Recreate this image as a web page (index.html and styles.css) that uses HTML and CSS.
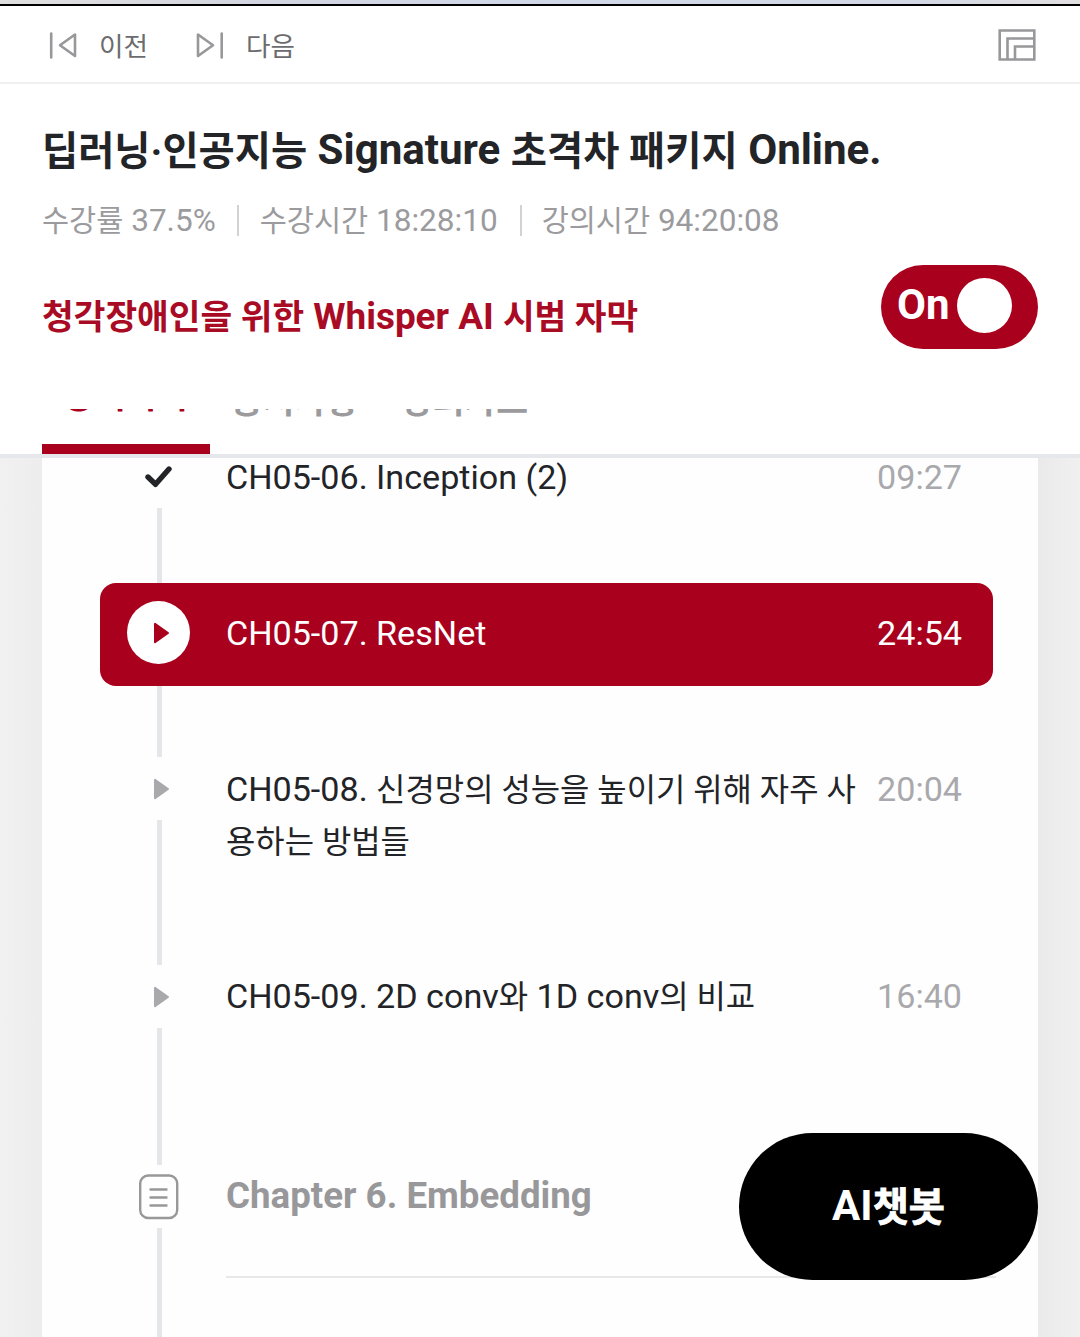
FILE: index.html
```html
<!DOCTYPE html>
<html lang="ko">
<head>
<meta charset="utf-8">
<title>딥러닝·인공지능 Signature 초격차 패키지 Online.</title>
<link rel="stylesheet" href="styles.css">
</head>
<body>
<div class="page">
  <div class="video-edge"></div>
  <nav class="nav">
    <a class="nav-link">
      <svg width="28" height="28" viewBox="0 0 28 28" fill="none" stroke="#98989b" stroke-width="2.600" stroke-linecap="round" stroke-linejoin="round"><path d="M2.200 2.500v24M26 3.500V25L11 14.200z"/></svg>
      <span class="ko">이전</span>
    </a>
    <a class="nav-link next">
      <svg width="28" height="28" viewBox="0 0 28 28" fill="none" stroke="#98989b" stroke-width="2.600" stroke-linecap="round" stroke-linejoin="round"><path d="M25.700 2.500v24M2 3.500V25L17 14.200z"/></svg>
      <span class="ko">다음</span>
    </a>
    <svg class="layout-icon" width="38" height="32" viewBox="0 0 38 32" fill="none" stroke="#98989b" stroke-width="2.600"><path d="M1.700 1.500h34.600v29H1.700zM9.500 30V9.500h27M17 30V17.500h19"/></svg>
  </nav>
  <header class="course">
    <h1 class="title"><span class="ko">딥러닝·인공지능</span> Signature <span class="ko">초격차 패키지</span> Online.</h1>
    <div class="stats">
      <span><span class="ko">수강률</span> 37.5%</span>
      <span><span class="ko">수강시간</span> 18:28:10</span>
      <span><span class="ko">강의시간</span> 94:20:08</span>
    </div>
    <div class="caption">
      <strong class="caption-label"><span class="ko">청각장애인을 위한</span> Whisper AI <span class="ko">시범 자막</span></strong>
      <div class="switch"><span class="switch-text">On</span><span class="knob"></span></div>
    </div>
    <div class="tabs">
      <a class="tab active"><span class="ko">강의목차</span></a>
      <a class="tab"><span class="ko">공지사항</span></a>
      <a class="tab"><span class="ko">강의자료</span></a>
    </div>
  </header>
  <main class="content">
    <ul class="lessons">
      <li class="lesson">
        <div class="rail"><div class="mark"><svg width="28" height="22" viewBox="0 0 28 22" fill="none" stroke="#222428" stroke-width="5.400" stroke-linecap="round" stroke-linejoin="round"><path d="M3 11l7.500 7.300L24 3"/></svg></div></div>
        <div class="name">CH05-06. Inception (2)</div>
        <div class="time">09:27</div>
      </li>
      <li class="lesson current">
        <div class="rail"><div class="mark"><svg class="play" width="17" height="22" viewBox="0 0 17 22"><path d="M2 1.800v18.400L15 11z"/></svg></div></div>
        <div class="name">CH05-07. ResNet</div>
        <div class="time">24:54</div>
      </li>
      <li class="lesson two-line">
        <div class="rail"><div class="mark"><svg class="play" width="17" height="22" viewBox="0 0 17 22"><path d="M2 1.800v18.400L15 11z"/></svg></div></div>
        <div class="name">CH05-08. <span class="ko">신경망의 성능을 높이기 위해 자주 사<br>용하는 방법들</span></div>
        <div class="time">20:04</div>
      </li>
      <li class="lesson last">
        <div class="rail"><div class="mark"><svg class="play" width="17" height="22" viewBox="0 0 17 22"><path d="M2 1.800v18.400L15 11z"/></svg></div></div>
        <div class="name">CH05-09. 2D conv<span class="ko">와</span> 1D conv<span class="ko">의 비교</span></div>
        <div class="time">16:40</div>
      </li>
      <li class="lesson chapter">
        <div class="rail"><div class="mark"><svg width="40" height="46" viewBox="0 0 40 46" fill="none" stroke="#98989b" stroke-width="2.400" stroke-linecap="round"><rect x="1.200" y="1.500" width="37" height="42.500" rx="8"/><path d="M11.500 15.500h16M11.500 23.500h16M11.500 31.500h16"/></svg></div></div>
        <div class="name">Chapter 6. Embedding</div>
      </li>
    </ul>
  </main>
  <button class="chatbot">AI<span class="ko">챗봇</span></button>
</div>
</body>
</html>
```
FILE: styles.css
```css
* { box-sizing: border-box; }
body { margin: 0; background: #fff; color: #222428; font-family: Roboto, "Noto Sans CJK KR", sans-serif; }
.page { position: relative; display: flex; flex-direction: column; width: 1080px; height: 1337px; overflow: hidden; }

/* Hangul is set slightly smaller than the Latin text beside it */
.ko { font-size: .935em; }

.video-edge { flex: none; height: 6px; border-bottom: 2px solid #000; background: linear-gradient(90deg, #e0dfdf, #d2d5e0 25%, #d0d8e8 50%, #d2d8e4 85%, #e2dfe0); }
.nav { flex: none; display: flex; align-items: center; height: 78px; padding: 2px 44px 0 49px; border-bottom: 2px solid #f0f0f0; }
.nav-link { display: flex; align-items: center; gap: 22px; font-size: 28.500px; line-height: 40px; color: #6c6c6e; }
.nav-link .ko { position: relative; top: 2px; }
.next { margin-left: 48px; }
.layout-icon { margin-left: auto; }

.course { flex: none; display: flex; flex-direction: column; height: 374px; padding: 0 42px; border-bottom: 4px solid #e6e7ea; }
.title { margin: 36px 0 0; font-size: 42.080px; line-height: 60px; font-weight: 700; white-space: nowrap; }
.title .ko { position: relative; top: 1px; }
.stats { display: flex; margin-top: 20px; font-size: 31.540px; line-height: 40px; color: #9b9b9e; white-space: nowrap; }
.stats > span + span { margin-left: 22px; padding-left: 23px; background: linear-gradient(#d2d2d4, #d2d2d4) 0 4px / 2px 31px no-repeat; }
.stats > span:nth-child(2) { margin-left: 21px; }
.stats > span:nth-child(3) { padding-left: 22px; }
.caption { display: flex; justify-content: space-between; align-items: center; height: 84px; margin-top: 24px; }
.caption-label { margin-top: 20px; font-size: 36.860px; line-height: 50px; color: #a90a24; white-space: nowrap; }
.switch { display: flex; align-items: center; width: 157px; height: 84px; padding-left: 16px; border-radius: 42px; background: #a9001e; color: #fff; font-size: 42px; font-weight: 700; line-height: 50px; }
.switch-text { width: 60px; margin-top: -4px; }
.knob { width: 55px; height: 55px; margin-top: -3px; border-radius: 50%; background: #fff; }
.tabs { display: flex; gap: 21px; height: 45px; margin-top: 60px; overflow: hidden; font-size: 37px; font-weight: 700; line-height: 40px; color: #9b9b9e; }
.tab { height: 45px; }
.tab .ko { display: block; margin-top: -28px; white-space: nowrap; }
.tab.active { width: 168px; border-bottom: 10px solid #a9001e; color: #a9001e; text-align: center; }
.tab.active .ko { margin-top: -33px; }
.tab + .tab { width: 149px; text-align: center; }
.tab.active + .tab { margin-left: -11px; }

.content { flex: 1; min-height: 0; padding: 0 42px; background: linear-gradient(90deg, #f1f1f1, #ededed 42px, #eaeaea 1038px, #f0f0f0); }
.lessons { height: 100%; margin: 0; padding: 0 76px 0 85px; overflow: hidden; list-style: none; background: #fefefe; }
.lesson { position: relative; display: flex; height: 156px; font-size: 34.120px; line-height: 52px; }
.lesson:first-child { margin-top: -13px; }
.two-line { height: 208px; line-height: 51px; }
.last { height: 200px; }
.rail { position: relative; flex: none; display: flex; flex-direction: column; width: 63px; margin-right: 36px; }
.rail::after { content: ""; flex: 1; width: 5px; margin-left: 30px; background: #e5e6ea; }
.mark { flex: none; display: flex; align-items: center; justify-content: center; width: 63px; height: 63px; }
.play { margin-left: 5px; fill: #a9a9ad; stroke: #a9a9ad; stroke-width: 2px; stroke-linejoin: round; }
.name { position: relative; flex: 1; padding-top: 6px; white-space: nowrap; }
.time { position: relative; padding-top: 6px; color: #a9a9ad; }
.two-line .name, .two-line .time { padding-top: 7px; }
.last .name, .last .time { padding-top: 5px; }
.current::before { content: ""; position: absolute; left: -27px; top: -18px; width: 893px; height: 103px; border-radius: 16px; background: #a9001e; }
.current .name, .current .time { color: #fff; }
.current .mark { border-radius: 50%; background: #fff; }
.current .play { fill: #a9001e; stroke: #a9001e; }
/* the connector resumes below the highlighted bar */
.current .rail::after { margin-top: 22px; }
.chapter { height: 190px; font-size: 36.700px; font-weight: 700; color: #98989b; }
.chapter .name { height: 113px; padding-top: 5px; margin-right: -34px; border-bottom: 2px solid #e8e8ea; }

.chatbot { position: absolute; left: 739px; top: 1133px; width: 299px; height: 147px; padding: 0; border: 0; border-radius: 74px; background: #000; color: #fff; font: 700 42px/60px Roboto, "Noto Sans CJK KR", sans-serif; }
.chatbot .ko { position: relative; top: 1px; -webkit-text-stroke: .8px #fff; }
```
